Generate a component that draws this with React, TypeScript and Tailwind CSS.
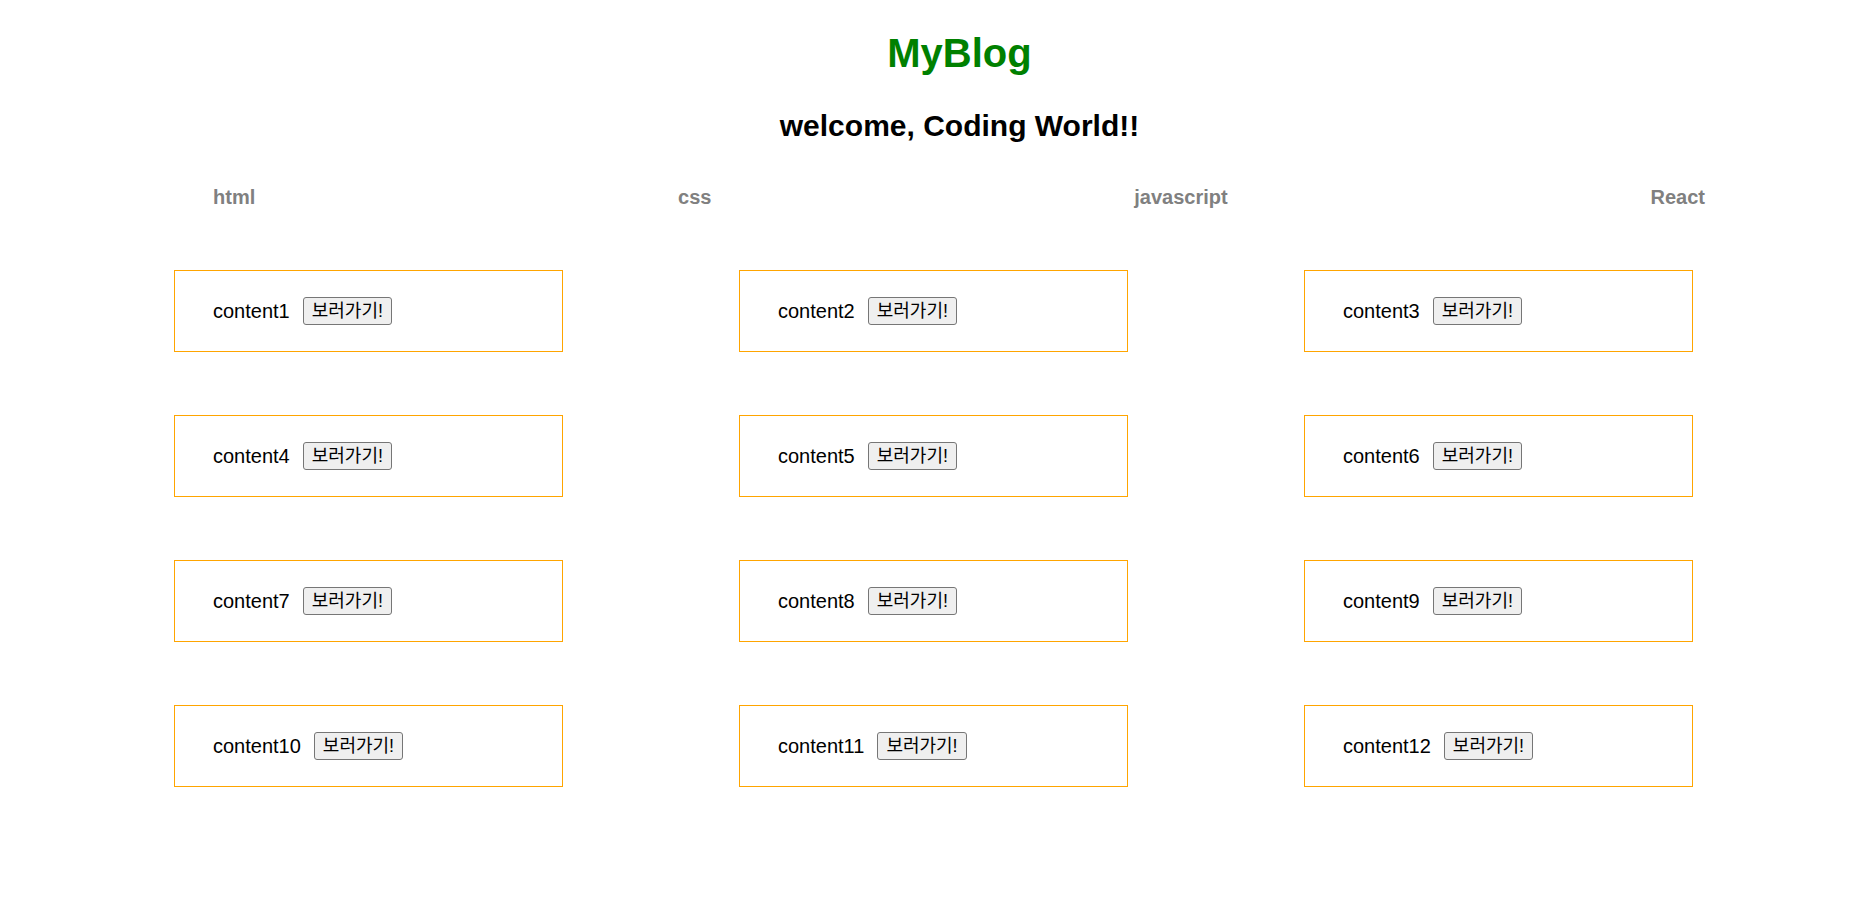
const navItems = ["html", "css", "javascript", "React"];
const posts = Array.from({ length: 12 }, (_, i) => `content${i + 1}`);

function PostCard({ title }: { title: string }) {
  return (
    <div className="flex h-[82px] items-center border border-[#ffa500] pl-[38px]">
      <span className="text-[20px] leading-[24px] text-black">{title}</span>
      <button className="ml-[13px] flex h-[28px] items-center rounded-[3px] border border-[#767676] bg-[#efefef] px-[8px] text-[18px] leading-none text-black">
        보러가기!
      </button>
    </div>
  );
}

export default function App() {
  return (
    <div
      className="min-h-[898px] bg-white"
      style={{ fontFamily: '"Liberation Sans", "Noto Sans CJK KR", sans-serif' }}
    >
      <div className="pl-[62px]">
        <h1 className="pt-[29px] text-center text-[40px] font-bold leading-[48px] text-[#008000]">
          MyBlog
        </h1>
        <h2 className="mt-[31px] text-center text-[30px] font-bold leading-[36px] text-black">
          welcome, Coding World!!
        </h2>
      </div>
      <nav className="mt-[41px] flex justify-between pl-[213px] pr-[152px]">
        {navItems.map((item) => (
          <span key={item} className="text-[20px] font-bold leading-[24px] text-[#808080]">
            {item}
          </span>
        ))}
      </nav>
      <div className="mt-[61px] grid grid-cols-[repeat(3,389px)] gap-x-[176px] gap-y-[63px] pl-[174px]">
        {posts.map((p) => (
          <PostCard key={p} title={p} />
        ))}
      </div>
    </div>
  );
}
